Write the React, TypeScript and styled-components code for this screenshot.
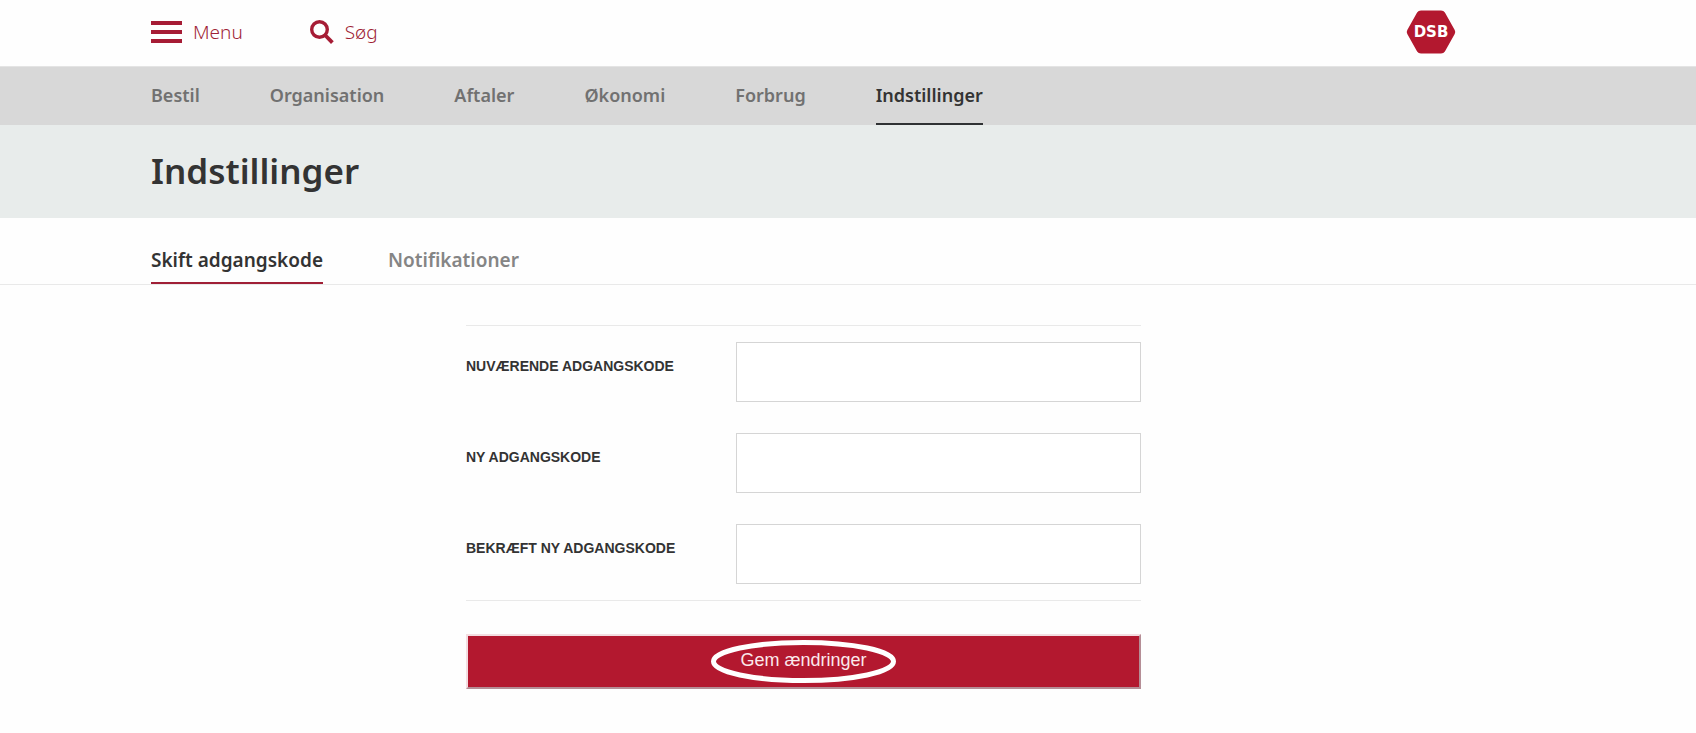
import React from "react";
import styled, { createGlobalStyle } from "styled-components";

const GlobalStyle = createGlobalStyle`
  *, *::before, *::after { box-sizing: border-box; }
  body {
    margin: 0;
    background: #fefefe;
    color: #333;
    font-family: "Noto Sans", "Open Sans", sans-serif;
  }
`;

const Container = styled.div`
  padding: 0 240px 0 151px;
`;

const TopBar = styled(Container)`
  display: flex;
  align-items: center;
  height: 66px;
  padding-bottom: 2px;
`;

const TopButton = styled.button`
  display: flex;
  align-items: center;
  gap: 11px;
  margin-right: 67px;
  padding: 0;
  border: 0;
  background: none;
  color: #a01f36;
  font: 300 19px/26px "Noto Sans", "Open Sans", sans-serif;
  cursor: pointer;
`;

const LogoLink = styled.a`
  display: block;
  height: 44px;
  margin-left: auto;
`;

const NavBar = styled.nav`
  border-top: 1px solid #e4e4e4;
  background: #d8d8d8;
`;

const LinkRow = styled(Container)<{ $gap: number }>`
  display: flex;
  gap: ${(p) => p.$gap}px;
`;

const NavLink = styled.a<{ $active?: boolean }>`
  height: 58px;
  border-bottom: 2px solid ${(p) => (p.$active ? "#2f3133" : "transparent")};
  color: ${(p) => (p.$active ? "#333" : "#717171")};
  font-size: 18px;
  font-weight: 600;
  line-height: 56px;
  text-decoration: none;
`;

const TitleBand = styled.header`
  padding-bottom: 2px;
  background: #e8eceb;
`;

const Title = styled.h1`
  margin: 0;
  font-size: 35px;
  font-weight: 600;
  line-height: 91px;
`;

const TabBar = styled.nav`
  padding-top: 18px;
  border-bottom: 1px solid #e9e9e9;
`;

const TabLink = styled.a<{ $active?: boolean }>`
  height: 48px;
  border-bottom: 2px solid ${(p) => (p.$active ? "#a01f36" : "transparent")};
  color: ${(p) => (p.$active ? "#333" : "#858585")};
  font-size: 19px;
  font-weight: 600;
  line-height: 48px;
  text-decoration: none;
`;

const Form = styled.form`
  max-width: 675px;
  margin: 40px auto 44px;
  font-family: "Liberation Sans", Arial, sans-serif;
`;

const Fields = styled.div`
  display: grid;
  gap: 31px;
  padding: 16px 0;
  border: solid #e9e9e9;
  border-width: 1px 0;
`;

const Field = styled.div`
  display: grid;
  grid-template-columns: 2fr 3fr;
`;

const Label = styled.label`
  padding-top: 14px;
  font-size: 14px;
  font-weight: 700;
  line-height: 20px;
  text-transform: uppercase;
`;

const PasswordInput = styled.input`
  width: 100%;
  height: 60px;
  padding: 0 16px;
  border: 1px solid #d5d5d5;
  border-radius: 0;
  background: #fff;
  font-size: 16px;
`;

const SaveButton = styled.button`
  display: flex;
  justify-content: center;
  align-items: center;
  width: 100%;
  height: 55px;
  margin-top: 33px;
  padding: 0;
  border: 2px solid;
  border-color: #f3dde1 #b58e96 #b58e96 #f3dde1;
  background: #b3182f;
  color: #fbe9ec;
  font: 18px/24px "Liberation Sans", Arial, sans-serif;
  cursor: pointer;
`;

const Highlight = styled.span`
  position: relative;
  display: flex;
  justify-content: center;
  width: 185px;
  height: 43px;
  padding-top: 8px;

  svg {
    position: absolute;
    inset: 0;
  }
`;

function Ring() {
  return (
    <svg width="185" height="43" viewBox="0 0 185 43" aria-hidden="true">
      <ellipse cx="92.5" cy="21.5" rx="90" ry="19" fill="none" stroke="#fff" strokeWidth="5" />
    </svg>
  );
}

function MenuIcon() {
  return (
    <svg width="31" height="22" viewBox="0 0 31 22" aria-hidden="true">
      <path d="M0 0h31v4H0zM0 9h31v4H0zM0 18h31v4H0z" fill="#a61c35" />
    </svg>
  );
}

function SearchIcon() {
  return (
    <svg width="24" height="24" viewBox="0 0 24 24" aria-hidden="true">
      <circle cx="9.5" cy="9.5" r="7.8" fill="none" stroke="#a61c35" strokeWidth="3.4" />
      <path d="M15 15l7.4 7.6" stroke="#a61c35" strokeWidth="3.8" />
    </svg>
  );
}

function Logo() {
  return (
    <svg width="50" height="44" viewBox="0 0 50 44" role="img" aria-label="DSB">
      <path
        d="M15 .5h20q2.6 0 3.9 2l9.8 17.400q1.200 2.100 0 4.200L38.900 41.500q-1.300 2-3.900 2H15q-2.600 0-3.900-2L1.300 24.100q-1.200-2.100 0-4.200L11.100 2.500q1.300-2 3.900-2z"
        fill="#b3182f"
      />
      <text
        x="25"
        y="27"
        textAnchor="middle"
        fill="#fff"
        fontFamily="DejaVu Sans, sans-serif"
        fontSize="15"
        fontWeight="700"
      >
        DSB
      </text>
    </svg>
  );
}

const sections = ["Bestil", "Organisation", "Aftaler", "Økonomi", "Forbrug", "Indstillinger"];
const tabs = ["Skift adgangskode", "Notifikationer"];
const fields = [
  { id: "current", label: "Nuværende adgangskode" },
  { id: "new", label: "Ny adgangskode" },
  { id: "confirm", label: "Bekræft ny adgangskode" },
];

export default function App() {
  return (
    <>
      <GlobalStyle />
      <TopBar>
        <TopButton type="button">
          <MenuIcon />
          Menu
        </TopButton>
        <TopButton type="button">
          <SearchIcon />
          Søg
        </TopButton>
        <LogoLink href="#">
          <Logo />
        </LogoLink>
      </TopBar>
      <NavBar>
        <LinkRow $gap={70}>
          {sections.map((name) => (
            <NavLink key={name} href="#" $active={name === "Indstillinger"}>
              {name}
            </NavLink>
          ))}
        </LinkRow>
      </NavBar>
      <TitleBand>
        <Container>
          <Title>Indstillinger</Title>
        </Container>
      </TitleBand>
      <TabBar>
        <LinkRow $gap={65}>
          {tabs.map((name, i) => (
            <TabLink key={name} href="#" $active={i === 0}>
              {name}
            </TabLink>
          ))}
        </LinkRow>
      </TabBar>
      <Container as="main">
        <Form onSubmit={(e) => e.preventDefault()}>
          <Fields>
            {fields.map((f) => (
              <Field key={f.id}>
                <Label htmlFor={f.id}>{f.label}</Label>
                <PasswordInput id={f.id} type="password" />
              </Field>
            ))}
          </Fields>
          <SaveButton type="submit">
            <Highlight>
              Gem ændringer
              <Ring />
            </Highlight>
          </SaveButton>
        </Form>
      </Container>
    </>
  );
}
